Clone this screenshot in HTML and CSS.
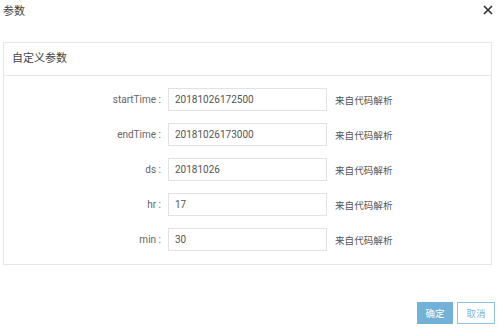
FILE: index.html
```html
<!DOCTYPE html>
<html lang="zh">
<head>
    <meta charset="UTF-8">
    <title>参数</title>
    <link rel="stylesheet" href="styles.css">
</head>
<body>
    <div class="dialog">
        <div class="dialog-head">
            <span class="dialog-title">参数</span>
            <span class="close">
                <svg width="10" height="10" viewBox="0 0 10 10">
                    <path d="M1 1 L9 9 M9 1 L1 9" stroke="#333" stroke-width="1.7" fill="none"/>
                </svg>
            </span>
        </div>
        <div class="panel">
            <div class="panel-head">自定义参数</div>
            <div class="panel-body">
                <div class="row">
                    <label>startTime :</label>
                    <input type="text" value="20181026172500">
                    <span class="hint">来自代码解析</span>
                </div>
                <div class="row">
                    <label>endTime :</label>
                    <input type="text" value="20181026173000">
                    <span class="hint">来自代码解析</span>
                </div>
                <div class="row">
                    <label>ds :</label>
                    <input type="text" value="20181026">
                    <span class="hint">来自代码解析</span>
                </div>
                <div class="row">
                    <label>hr :</label>
                    <input type="text" value="17">
                    <span class="hint">来自代码解析</span>
                </div>
                <div class="row">
                    <label>min :</label>
                    <input type="text" value="30">
                    <span class="hint">来自代码解析</span>
                </div>
            </div>
        </div>
        <div class="dialog-foot">
            <button class="btn btn-primary">确定</button>
            <button class="btn">取消</button>
        </div>
    </div>
</body>
</html>
```

FILE: styles.css
```css
body {
    margin: 0;
    padding: 0;
    background-color: #fff;
    font-family: Roboto, "Noto Sans CJK SC", sans-serif;
    color: #555;
}
.dialog {
    width: 499px;
    height: 330px;
}
.dialog-head {
    display: flex;
    justify-content: space-between;
    align-items: center;
    height: 19px;
    padding: 0 6px 0 3px;
}
.dialog-title {
    font-size: 11px;
    color: #444;
}
.close {
    display: flex;
}
.panel {
    margin: 23px 7px 0 3px;
    border: 1px solid #e6e6e6;
}
.panel-head {
    height: 32px;
    line-height: 32px;
    padding-left: 8px;
    font-size: 11px;
    color: #444;
    border-bottom: 1px solid #e6e6e6;
}
.panel-body {
    display: flex;
    flex-direction: column;
    gap: 12px;
    padding: 12px 0 13px;
}
.row {
    display: flex;
    align-items: center;
}
.row label {
    width: 157px;
    text-align: right;
    font-size: 10px;
    color: #666;
}
.row input {
    width: 159px;
    height: 23px;
    box-sizing: border-box;
    margin-left: 7px;
    padding: 0 6px;
    border: 1px solid #e2e2e2;
    font-family: Roboto, sans-serif;
    font-size: 10px;
    color: #555;
    outline: none;
}
.hint {
    margin-left: 8px;
    font-size: 9.6px;
    color: #555;
}
.dialog-foot {
    display: flex;
    justify-content: flex-end;
    gap: 4px;
    padding: 37px 4px 0 0;
}
.btn {
    width: 38px;
    height: 22px;
    padding: 0;
    border: 1px solid #8cc0de;
    background-color: #fff;
    color: #7fb5d6;
    font-family: "Noto Sans CJK SC", sans-serif;
    font-size: 9.5px;
}
.btn-primary {
    width: 36px;
    background-color: #72b2d9;
    border-color: #72b2d9;
    color: #fff;
}
```
